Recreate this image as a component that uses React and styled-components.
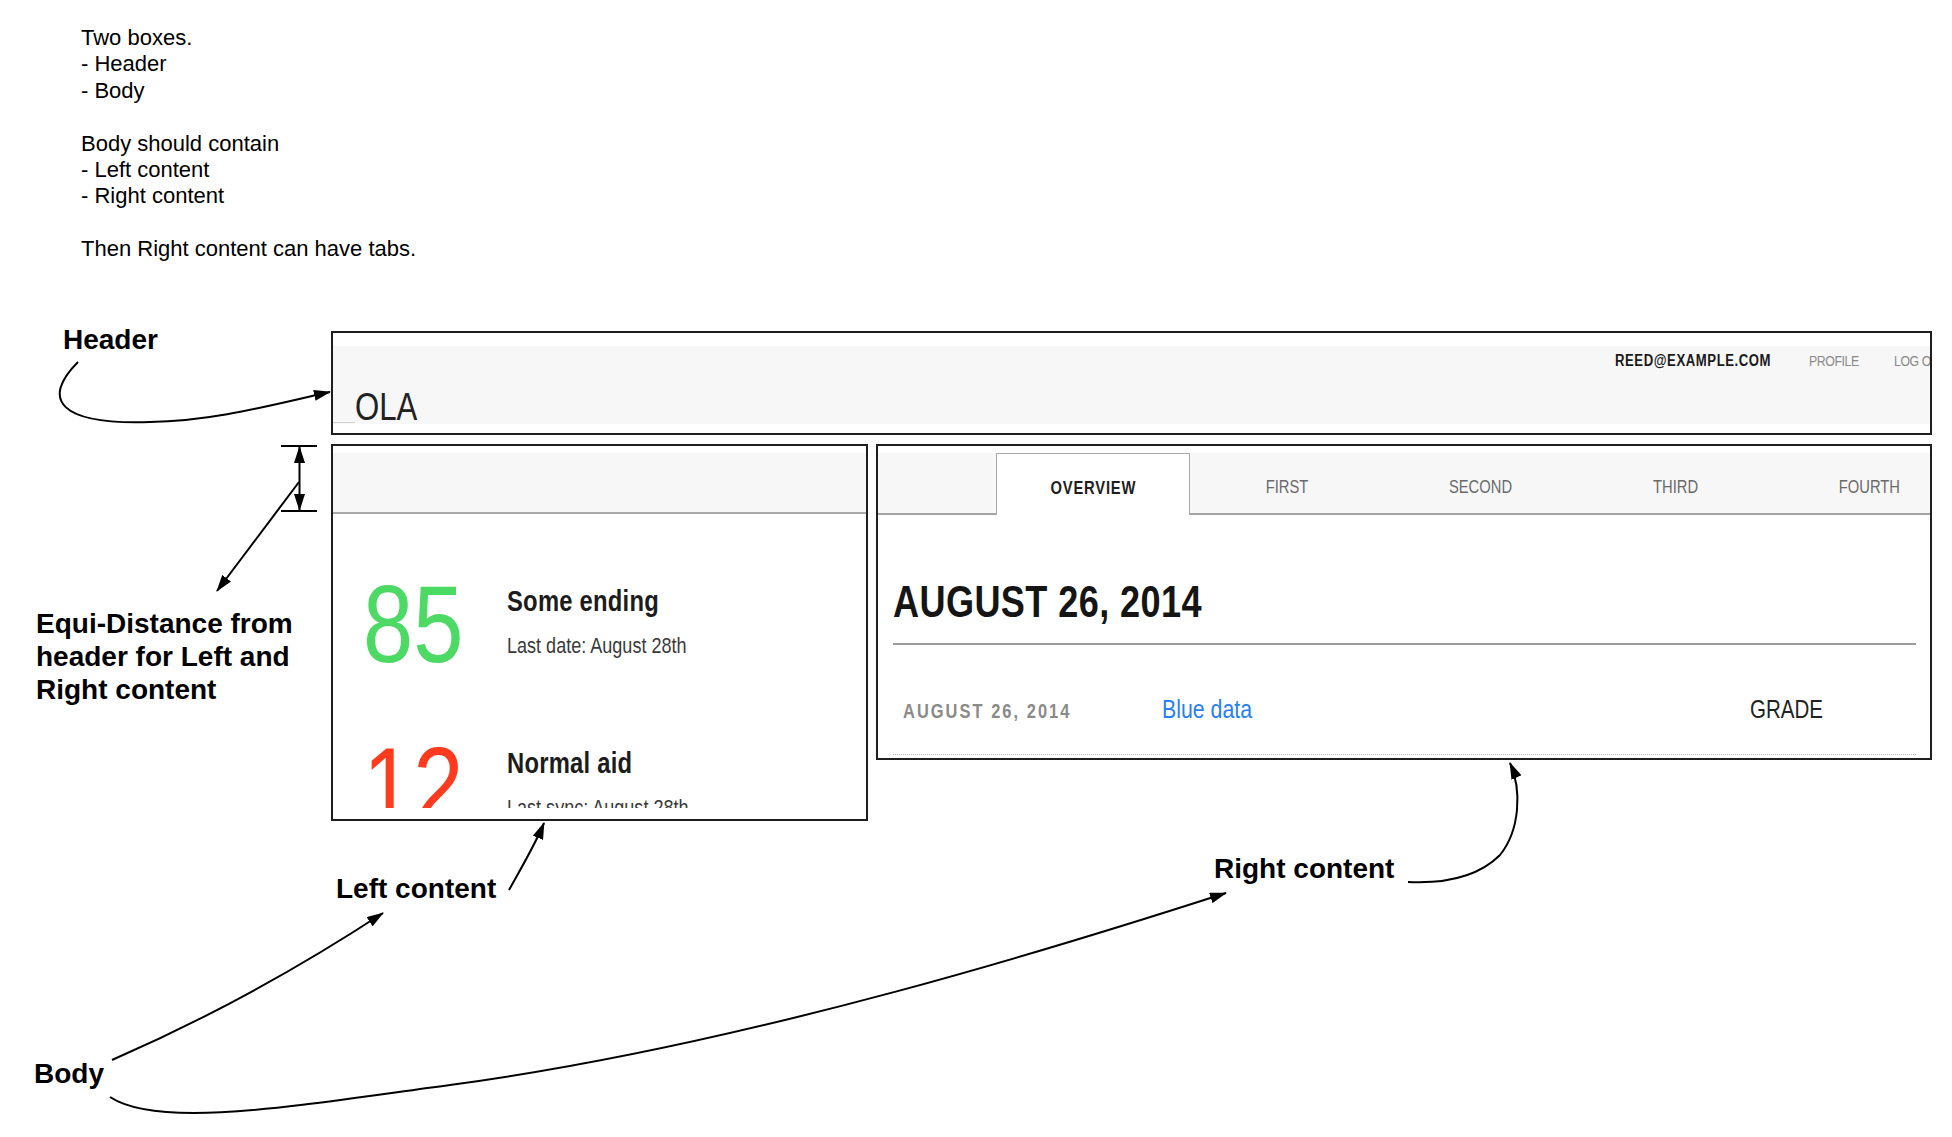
import React from 'react';
import styled, { createGlobalStyle, css } from 'styled-components';

// no condensed face is installed, so the mock UI text is squeezed to an Arial Narrow width
const narrow = css`
  display: inline-block;
  white-space: nowrap;
  transform: scaleX(0.82);
  transform-origin: 0 50%;
`;

const GlobalStyle = createGlobalStyle`
  *, *::before, *::after {
    box-sizing: border-box;
  }
  html, body {
    margin: 0;
    padding: 0;
    background: #fff;
  }
  body {
    font-family: "Liberation Sans", Arial, sans-serif;
    color: #000;
  }
`;

const Canvas = styled.div`
  position: relative;
  width: 1952px;
  height: 1137px;
  overflow: hidden;
  background: #fff;
`;

const Notes = styled.div`
  padding: 25px 0 0 81px;
  font-size: 22px;
  line-height: 26.4px;

  p {
    margin: 0 0 26.4px;
  }
  p:last-child {
    margin-bottom: 0;
  }
`;

/* ---------- the wireframe ---------- */

const Mockup = styled.div`
  width: 1601px;
  margin: 68.4px 0 0 331px;
`;

const Frame = styled.div`
  border: 2px solid #1e1e1e;
  background: #fff;
  overflow: hidden;
`;

const HeaderBox = styled(Frame)`
  height: 104px;
  padding: 13px 0 9px;
`;

const Band = styled.div`
  height: 78px;
  background: #f7f7f7;
  display: grid;
  grid-template-columns: 22px 1260px max-content;
  overflow: hidden;
`;

const Crumb = styled.span`
  align-self: end;
  height: 1px;
  margin-bottom: 1px;
  background: #d2d2d2;
`;

const Logo = styled.div`
  ${narrow};
  align-self: end;
  font-size: 38px;
  line-height: 34px;
  color: #222;
`;

const Nav = styled.nav`
  align-self: start;
  display: grid;
  grid-template-columns: 194px 85px max-content;
  margin-top: 5px;
  line-height: 20px;
`;

const NavItem = styled.span`
  ${narrow};
  font-size: ${(p) => (p.$strong ? '16px' : '15px')};
  font-weight: ${(p) => (p.$strong ? 700 : 400)};
  letter-spacing: ${(p) => (p.$strong ? '0.7px' : '-0.5px')};
  color: ${(p) => (p.$strong ? '#1a1a1a' : '#8a8a8a')};
`;

const BodyRow = styled.div`
  display: flex;
  align-items: flex-start;
  gap: 8px;
  margin-top: 9px;
`;

const LeftBox = styled(Frame)`
  width: 537px;
  height: 377px;
  padding: 7px 0 11px;
`;

const PanelBar = styled.div`
  height: 61px;
  background: #f7f7f7;
  border-bottom: 2px solid #a9a9a9;
`;

const Stats = styled.div`
  height: 294px;
  overflow: hidden;
  padding: 54.6px 0 0 30px;
  display: flex;
  flex-direction: column;
  gap: 52px;
`;

const Stat = styled.div`
  display: flex;
  flex-shrink: 0;
  height: 110px;
`;

const StatValue = styled.div`
  flex: 0 0 143.5px;
`;

const StatNumber = styled.span`
  ${narrow};
  font-size: 110px;
  line-height: 110px;
  color: ${(p) => p.$tone};
`;

const StatText = styled.div`
  display: flex;
  flex-direction: column;
  align-items: flex-start;
  padding-top: 15.2px;
`;

const StatTitle = styled.div`
  ${narrow};
  font-size: 29px;
  line-height: 34px;
  font-weight: 700;
  letter-spacing: 0.3px;
  color: #1c1c1c;
`;

const StatMeta = styled.div`
  ${narrow};
  margin-top: 15.3px;
  font-size: 22px;
  line-height: 26px;
  color: #3a3a3a;
`;

const RightBox = styled(Frame)`
  width: 1056px;
  height: 316px;
  padding-top: 7px;
`;

const TabBar = styled.div`
  display: flex;
  height: 62px;
  background: #f7f7f7;
  overflow: hidden;
`;

const TabLead = styled.div`
  flex: 0 0 118px;
  border-bottom: 2px solid #a3a3a3;
`;

const Tab = styled.div`
  flex: 0 0 194px;
  display: flex;
  align-items: center;
  justify-content: center;
  padding-top: 8px;
  background: ${(p) => (p.$active ? '#fff' : 'transparent')};
  border: ${(p) => (p.$active ? '1.5px solid #a9a9a9' : 'none')};
  border-bottom: ${(p) => (p.$active ? 'none' : '2px solid #a3a3a3')};
`;

const TabLabel = styled.span`
  ${narrow};
  transform-origin: 50% 50%;
  font-size: 18px;
  font-weight: ${(p) => (p.$active ? 700 : 400)};
  letter-spacing: ${(p) => (p.$active ? '1px' : '0')};
  color: ${(p) => (p.$active ? '#1e1e1e' : '#6a6a6a')};
`;

const Content = styled.div`
  padding: 62px 14px 0 15px;
`;

const DayHeading = styled.h2`
  margin: 0;
  padding-bottom: 16px;
  border-bottom: 2px solid #9c9c9c;
  font-size: 44px;
  line-height: 50px;
  font-weight: 700;
  color: #151515;
`;

const HeadingText = styled.span`
  ${narrow};
  letter-spacing: 0.5px;
`;

const EntryRow = styled.div`
  display: grid;
  grid-template-columns: 259px 588px 1fr;
  align-items: baseline;
  padding: 49px 0 30px 10px;
  border-bottom: 1px dotted #b5b5b5;
`;

const EntryDate = styled.span`
  ${narrow};
  font-size: 20px;
  line-height: 24px;
  font-weight: 700;
  letter-spacing: 2.5px;
  color: #8a8a8a;
`;

const EntryLink = styled.a`
  ${narrow};
  justify-self: start;
  font-size: 26px;
  line-height: 30px;
  color: #2a7ff2;
  text-decoration: none;
`;

const EntryGrade = styled.span`
  ${narrow};
  justify-self: start;
  font-size: 25px;
  line-height: 30px;
  color: #222;
`;

/* ---------- annotations ---------- */

const Label = styled.div`
  position: absolute;
  left: ${(p) => p.$x}px;
  top: ${(p) => p.$y}px;
  font-size: 28px;
  line-height: 33px;
  font-weight: 700;
  white-space: nowrap;
  color: #000;
`;

const Overlay = styled.svg`
  position: absolute;
  left: 0;
  top: 0;
  pointer-events: none;
`;

const stats = [
  { value: 85, tone: '#4cd964', title: 'Some ending', meta: 'Last date: August 28th' },
  { value: 12, tone: '#ff3b1f', title: 'Normal aid', meta: 'Last sync: August 28th' },
];

const tabs = ['OVERVIEW', 'FIRST', 'SECOND', 'THIRD', 'FOURTH'];

function Arrows() {
  return (
    <Overlay width="1952" height="1137" viewBox="0 0 1952 1137">
      <defs>
        <marker
          id="head"
          viewBox="0 0 17 11"
          refX="16"
          refY="5.5"
          markerWidth="17"
          markerHeight="11"
          markerUnits="userSpaceOnUse"
          orient="auto-start-reverse"
        >
          <path d="M0,0 L17,5.5 L0,11 z" fill="#000" />
        </marker>
      </defs>
      <g fill="none" stroke="#000" strokeWidth="2">
        {/* header */}
        <path d="M78,362 C40,400 60,425 150,422 C215,421 275,404 330,392" markerEnd="url(#head)" />
        {/* equi-distance */}
        <path d="M281,446 H317 M281,511 H317" />
        <path d="M299.5,447 V510" markerStart="url(#head)" markerEnd="url(#head)" />
        <path d="M299,482 L217,591" markerEnd="url(#head)" />
        {/* left content */}
        <path d="M509,890 C520,870 535,845 544,823" markerEnd="url(#head)" />
        {/* right content */}
        <path d="M1408,882 C1450,884 1480,875 1500,855 C1520,830 1522,790 1510,763" markerEnd="url(#head)" />
        {/* body */}
        <path d="M112,1060 Q250,1000 383,913" markerEnd="url(#head)" />
        <path d="M110,1097 C160,1130 300,1105 450,1085 C750,1045 1080,940 1226,893" markerEnd="url(#head)" />
      </g>
    </Overlay>
  );
}

export default function App() {
  return (
    <Canvas>
      <GlobalStyle />
      <Notes>
        <p>
          Two boxes.
          <br />- Header
          <br />- Body
        </p>
        <p>
          Body should contain
          <br />- Left content
          <br />- Right content
        </p>
        <p>Then Right content can have tabs.</p>
      </Notes>

      <Mockup>
        <HeaderBox>
          <Band>
            <Crumb />
            <Logo>OLA</Logo>
            <Nav>
              <NavItem $strong>REED@EXAMPLE.COM</NavItem>
              <NavItem>PROFILE</NavItem>
              <NavItem>LOG OUT</NavItem>
            </Nav>
          </Band>
        </HeaderBox>

        <BodyRow>
          <LeftBox>
            <PanelBar />
            <Stats>
              {stats.map((s) => (
                <Stat key={s.title}>
                  <StatValue>
                    <StatNumber $tone={s.tone}>{s.value}</StatNumber>
                  </StatValue>
                  <StatText>
                    <StatTitle>{s.title}</StatTitle>
                    <StatMeta>{s.meta}</StatMeta>
                  </StatText>
                </Stat>
              ))}
            </Stats>
          </LeftBox>

          <RightBox>
            <TabBar>
              <TabLead />
              {tabs.map((t, i) => (
                <Tab key={t} $active={i === 0}>
                  <TabLabel $active={i === 0}>{t}</TabLabel>
                </Tab>
              ))}
            </TabBar>
            <Content>
              <DayHeading>
                <HeadingText>AUGUST 26, 2014</HeadingText>
              </DayHeading>
              <EntryRow>
                <EntryDate>AUGUST 26, 2014</EntryDate>
                <EntryLink href="#">Blue data</EntryLink>
                <EntryGrade>GRADE</EntryGrade>
              </EntryRow>
            </Content>
          </RightBox>
        </BodyRow>
      </Mockup>

      <Label $x={63} $y={323}>Header</Label>
      <Label $x={36} $y={607}>
        Equi-Distance from
        <br />
        header for Left and
        <br />
        Right content
      </Label>
      <Label $x={336} $y={872}>Left content</Label>
      <Label $x={1214} $y={852}>Right content</Label>
      <Label $x={34} $y={1057}>Body</Label>

      <Arrows />
    </Canvas>
  );
}
